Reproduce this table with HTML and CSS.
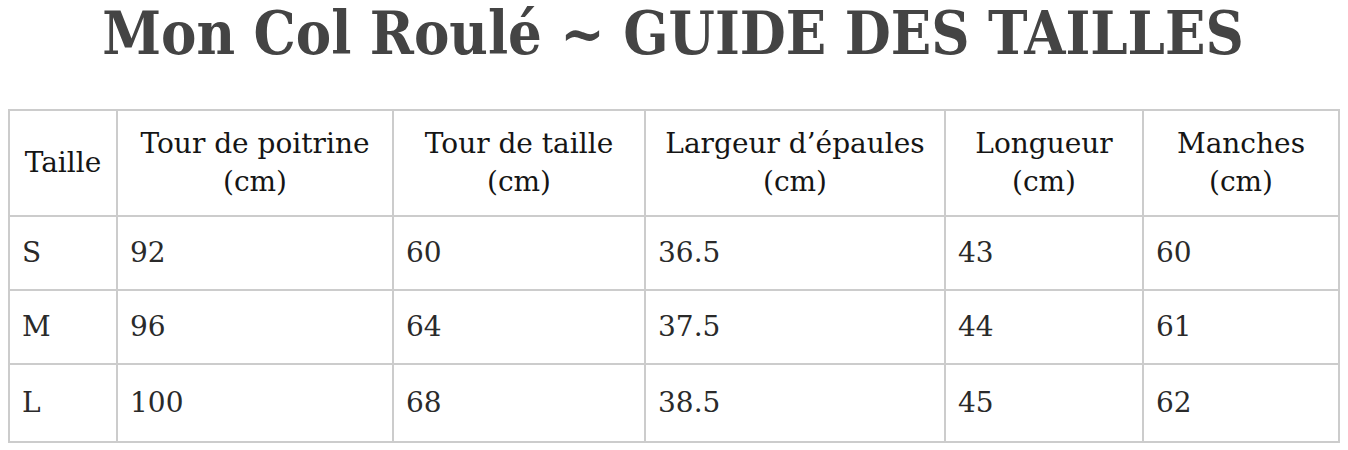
FILE: index.html
```html
<!DOCTYPE html>
<html lang="fr">
<head>
<meta charset="utf-8">
<title>Mon Col Roulé ~ Guide des tailles</title>
<link rel="stylesheet" href="styles.css">
</head>
<body>
<h1 class="title">Mon Col Roulé ~ GUIDE DES TAILLES</h1>
<table class="sizes">
  <colgroup>
    <col class="c1"><col class="c2"><col class="c3"><col class="c4"><col class="c5"><col class="c6">
  </colgroup>
  <thead>
    <tr>
      <th>Taille</th>
      <th>Tour de poitrine<br>(cm)</th>
      <th>Tour de taille<br>(cm)</th>
      <th>Largeur d’épaules<br>(cm)</th>
      <th>Longueur<br>(cm)</th>
      <th>Manches<br>(cm)</th>
    </tr>
  </thead>
  <tbody>
    <tr><td>S</td><td>92</td><td>60</td><td>36.5</td><td>43</td><td>60</td></tr>
    <tr><td>M</td><td>96</td><td>64</td><td>37.5</td><td>44</td><td>61</td></tr>
    <tr class="last"><td>L</td><td>100</td><td>68</td><td>38.5</td><td>45</td><td>62</td></tr>
  </tbody>
</table>
</body>
</html>
```
FILE: styles.css
```css
html, body { background: #fff; }
body {
  margin: 0;
  padding: 0 10px 0 8px;
  font-family: "DejaVu Serif", "Liberation Serif", serif;
}
.title {
  margin: 0;
  height: 109px;
  padding-top: 1px;
  box-sizing: border-box;
  text-align: center;
  font-family: "DejaVu Serif Condensed", "DejaVu Serif", serif;
  font-weight: bold;
  font-size: 59px;
  line-height: 66px;
  color: #444;
}
.sizes {
  border-collapse: collapse;
  table-layout: fixed;
  width: 1330px;
  color: #1f1f1f;
  font-size: 28px;
}
.c1 { width: 108px; }
.c2 { width: 276px; }
.c3 { width: 252px; }
.c4 { width: 300px; }
.c5 { width: 198px; }
.c6 { width: 196px; }
.sizes th, .sizes td {
  border: 2px solid #cccccc;
  padding: 0 12px;
}
.sizes th {
  font-weight: normal;
  text-align: center;
  height: 104px;
  line-height: 38px;
  color: #151515;
}
.sizes td {
  height: 72px;
  text-align: left;
  line-height: 36px;
  color: #2a2a2a;
}
.sizes tr.last td { height: 76px; }
```
